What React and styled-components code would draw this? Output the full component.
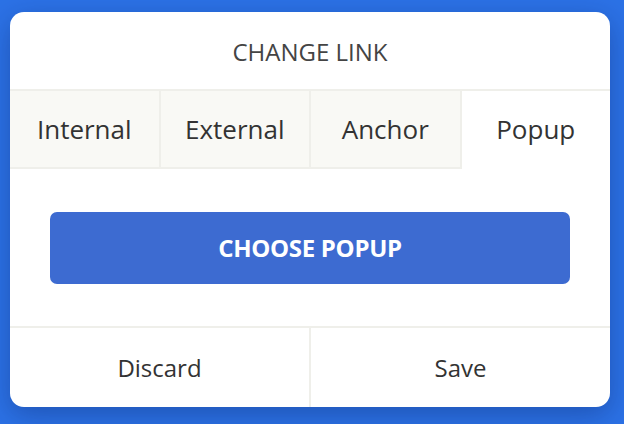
import React, { useState } from 'react'
import styled, { createGlobalStyle } from 'styled-components'

const GlobalStyle = createGlobalStyle`
    html, body {
        margin: 0;
        padding: 0;
        background: #2c72e6;
        font-family: "Open Sans", "Noto Sans", sans-serif;
    }
`

const Page = styled.div`
    width: 624px;
    height: 424px;
    box-sizing: border-box;
    padding: 12px 14px 17px 10px;
    background: #2c72e6;
`

const Card = styled.div`
    width: 600px;
    height: 395px;
    background: #fff;
    border-radius: 14px;
    overflow: hidden;
    display: flex;
    flex-direction: column;
    box-shadow: 0 8px 28px rgba(10, 30, 90, 0.35);
`

const Header = styled.div`
    height: 79px;
    flex-shrink: 0;
    display: flex;
    align-items: center;
    justify-content: center;
    color: #444;
    font-size: 24px;
    padding-top: 2px;
    box-sizing: border-box;
    border-bottom: 2px solid #efefea;
`

const Tabs = styled.div`
    display: flex;
    height: 78px;
    flex-shrink: 0;
`

const Tab = styled.div`
    flex: 1;
    display: flex;
    align-items: center;
    justify-content: center;
    font-size: 26px;
    color: #333;
    box-sizing: border-box;
    background: ${p => (p.$active ? '#fff' : '#f9f9f5')};
    border-bottom: 2px solid ${p => (p.$active ? 'transparent' : '#efefea')};
    border-right: ${p => (p.$last ? 'none' : '2px solid #efefea')};
    cursor: pointer;
`

const Body = styled.div`
    flex: 1;
    display: flex;
    align-items: center;
    justify-content: center;
    border-bottom: 2px solid #efefea;
`

const ChooseButton = styled.button`
    width: 520px;
    height: 72px;
    border: none;
    border-radius: 7px;
    background: #3d6bd1;
    color: #fff;
    font-family: "Open Sans", sans-serif;
    font-weight: 700;
    font-size: 24px;
    letter-spacing: -0.3px;
`

const Footer = styled.div`
    height: 79px;
    flex-shrink: 0;
    display: flex;
`

const FooterButton = styled.div`
    flex: 1;
    display: flex;
    align-items: center;
    justify-content: center;
    font-size: 24px;
    color: #333;
    border-right: ${p => (p.$divider ? '2px solid #efefea' : 'none')};
`

const tabs = ['Internal', 'External', 'Anchor', 'Popup']

const App = () => {
    const [active, setActive] = useState('Popup')
    return (
        <>
            <GlobalStyle />
            <Page>
                <Card>
                    <Header>CHANGE LINK</Header>
                    <Tabs>
                        {tabs.map((t, i) => (
                            <Tab
                                key={t}
                                $active={t === active}
                                $last={i === tabs.length - 1}
                                onClick={() => setActive(t)}
                            >
                                {t}
                            </Tab>
                        ))}
                    </Tabs>
                    <Body>
                        <ChooseButton>CHOOSE {active.toUpperCase()}</ChooseButton>
                    </Body>
                    <Footer>
                        <FooterButton $divider>Discard</FooterButton>
                        <FooterButton>Save</FooterButton>
                    </Footer>
                </Card>
            </Page>
        </>
    )
}

export default App
